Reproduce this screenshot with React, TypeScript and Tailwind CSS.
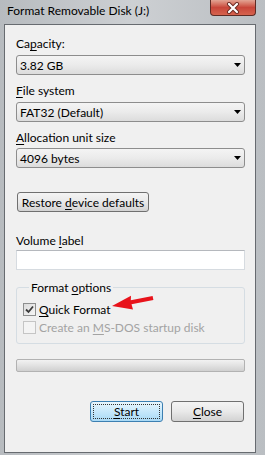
import React from "react";

function Combo({ children }: { children: React.ReactNode }) {
  return (
    <div className="flex h-[20px] w-[229px] items-center justify-between rounded-[3px] border border-[#8d8d8d] bg-linear-to-b from-[#f4f4f4] via-[#ebebeb] to-[#dcdcdc] pl-[3px] pr-[3px] text-[12px] leading-[15px] text-black">
      <span>{children}</span>
      <svg width="7" height="4" viewBox="0 0 7 4">
        <path d="M0 0H7L3.5 4Z" fill="#000" />
      </svg>
    </div>
  );
}

function Label({ children, className = "" }: { children: React.ReactNode; className?: string }) {
  return <div className={"text-[12px] leading-[15px] text-black " + className}>{children}</div>;
}

function U({ children }: { children: React.ReactNode }) {
  return <span className="underline decoration-1 underline-offset-[2px]">{children}</span>;
}

function Check({ checked, disabled }: { checked?: boolean; disabled?: boolean }) {
  return (
    <div
      className={
        "flex h-[13px] w-[13px] items-center justify-center border " +
        (disabled
          ? "border-[#c5c5c5] bg-[#f4f4f4]"
          : "border-[#8e8f8f] bg-linear-to-br from-[#dcdcdc] to-[#f6f6f6]")
      }
    >
      {checked && (
        <svg width="9" height="9" viewBox="0 0 9 9">
          <path d="M1 4.5L3.5 7L8 1.5" fill="none" stroke="#3b3b3b" strokeWidth="1.8" />
        </svg>
      )}
    </div>
  );
}

export default function App() {
  return (
    <div className="relative h-[455px] w-[265px] overflow-hidden bg-linear-to-r from-[#b7bbbf] via-[#cdd0d3] to-[#babec2] font-[Lato,sans-serif] text-black">
      {/* title bar */}
      <div className="flex h-[24px] items-start justify-between">
        <div className="pl-[7px] pt-[3px] text-[12px] leading-[15px] text-black">Format Removable Disk (J:)</div>
        <div className="mr-[9px] flex h-[16px] w-[46px] items-center justify-center rounded-b-[4px] border border-t-0 border-[#5e2b24] bg-linear-to-b from-[#e2a494] via-[#c8463a] to-[#d6634e]">
          <svg width="14" height="12" viewBox="0 0 14 12">
            <path d="M3 2L11 10M11 2L3 10" stroke="#6b2a22" strokeWidth="4" strokeLinecap="round" />
            <path d="M3 2L11 10M11 2L3 10" stroke="#ffffff" strokeWidth="2.2" strokeLinecap="round" />
          </svg>
        </div>
      </div>

      {/* panel */}
      <div className="ml-[4px] flex h-[429px] w-[252px] flex-col border border-[#676b70] bg-[#f0f0f0] pl-[11px] pt-[11px]">
        <Label>
          Ca<U>p</U>acity:
        </Label>
        <div className="mt-[4px]">
          <Combo>3.82 GB</Combo>
        </div>

        <Label className="mt-[8px]">
          <U>F</U>ile system
        </Label>
        <div className="mt-[4px]">
          <Combo>FAT32 (Default)</Combo>
        </div>

        <Label className="mt-[8px]">
          <U>A</U>llocation unit size
        </Label>
        <div className="mt-[3px]">
          <Combo>4096 bytes</Combo>
        </div>

        <div className="ml-[1px] mt-[24px] flex h-[20px] w-[132px] items-center justify-center rounded-[3px] border border-[#707070] bg-linear-to-b from-[#f4f4f4] via-[#e9e9e9] to-[#d2d2d2] text-[12px] leading-[15px]">
          <span>
            Restore <U>d</U>evice defaults
          </span>
        </div>

        <Label className="mt-[21px]">
          Volume <U>l</U>abel
        </Label>
        <div className="mt-[2px] h-[20px] w-[229px] border border-[#d6dbe0] border-t-[#b5b8bd] bg-white" />

        <fieldset className="mt-[10px] w-[229px] rounded-[3px] border border-[#d5dde3] pb-[8px] pl-[6px] pt-[7px]">
          <legend className="ml-[6px] px-[2px] text-[12px] leading-[15px]">
            Format <U>o</U>ptions
          </legend>
          <div className="flex h-[15px] items-center gap-[3px] text-[12px] leading-[15px]">
            <Check checked />
            <span>
              <U>Q</U>uick Format
            </span>
          </div>
          <div className="mt-[3px] flex h-[15px] items-center gap-[3px] text-[12px] leading-[15px] text-[#a3a3a3]">
            <Check disabled />
            <span>
              Create an <U>M</U>S-DOS startup disk
            </span>
          </div>
        </fieldset>

        <div className="mt-[15px] h-[13px] w-[229px] rounded-[2px] border border-[#b2b2b2] bg-linear-to-b from-[#f2f2f2] via-[#e2e2e2] to-[#d0d0d0]" />

        <div className="mt-[29px] flex w-[229px] justify-end gap-[8px] pr-[1px]">
          <div className="flex h-[21px] w-[73px] items-center justify-center rounded-[3px] border border-[#3c7fb1] bg-linear-to-b from-[#e9f6fd] via-[#c6e8fb] to-[#a8d9f5] p-[2px]">
            <div className="flex h-full w-full items-center justify-center border border-dotted border-[#333] text-[12px] leading-[15px]">
              <span>
                <U>S</U>tart
              </span>
            </div>
          </div>
          <div className="flex h-[21px] w-[73px] items-center justify-center rounded-[3px] border border-[#707070] bg-linear-to-b from-[#f4f4f4] via-[#e9e9e9] to-[#d2d2d2] text-[12px] leading-[15px]">
            <span>
              <U>C</U>lose
            </span>
          </div>
        </div>
      </div>

      {/* red arrow annotation */}
      <svg className="pointer-events-none absolute left-0 top-0" width="265" height="455" viewBox="0 0 265 455">
        <polygon
          points="112,306 133,309.5 131.5,304.2 153.4,300 152.6,296 130.8,300.2 131,295.8"
          fill="#e8131b"
        />
      </svg>
    </div>
  );
}
